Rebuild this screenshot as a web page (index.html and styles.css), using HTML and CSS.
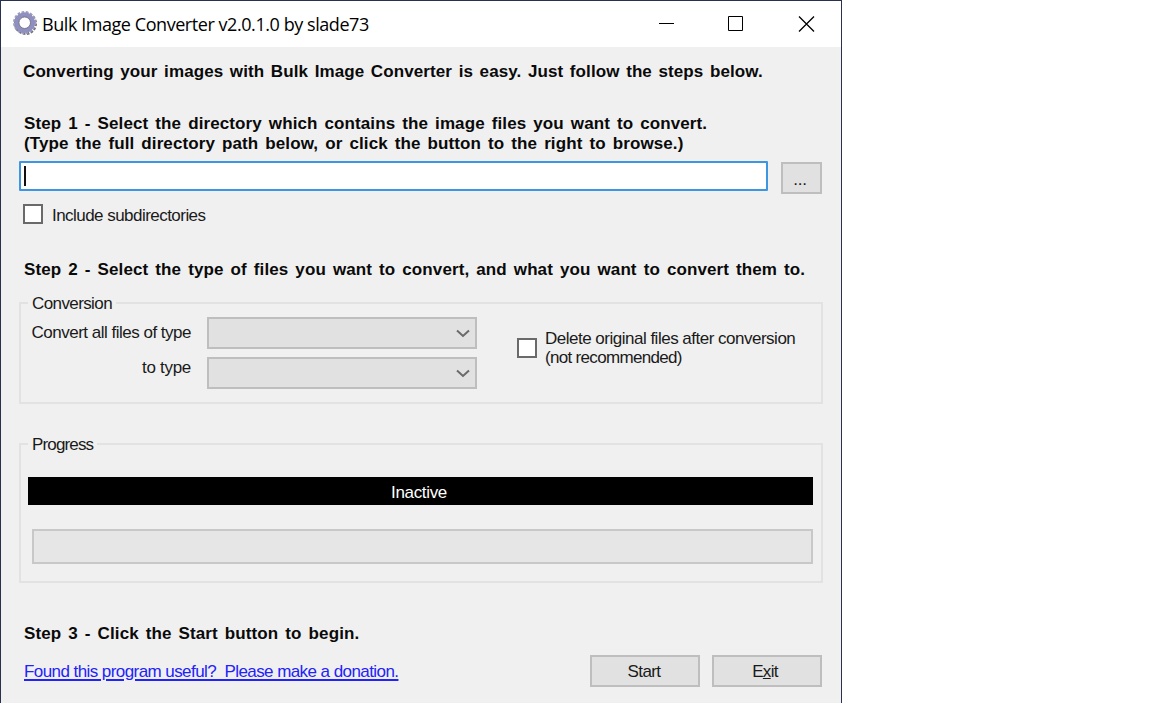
FILE: index.html
```html
<!DOCTYPE html>
<html lang="en">
<head>
<meta charset="utf-8">
<title>Bulk Image Converter</title>
<link rel="stylesheet" href="styles.css">
</head>
<body>
<div class="window">
  <header class="titlebar">
    <svg class="gear" width="26" height="26" viewBox="0 0 26 26">
      <circle cx="13.5" cy="13.5" r="10.2" fill="none" stroke="#73737d" stroke-width="2.6" stroke-dasharray="2.6 1.4"/>
      <circle cx="12.5" cy="12.5" r="10.4" fill="none" stroke="#9c9cc4" stroke-width="2.2" stroke-dasharray="2.6 1.56"/>
      <circle cx="12.7" cy="12.700" r="8" fill="none" stroke="#8f8fc0" stroke-width="4.400"/>
      <circle cx="12.7" cy="12.7" r="5.8" fill="none" stroke="#77778c" stroke-width="1"/>
    </svg>
    <h1 class="caption">Bulk Image Converter v2.0.1.0 by slade73</h1>
    <svg class="controls" width="160" height="18" viewBox="0 0 160 18" fill="none" stroke="#000" stroke-width="1">
      <path d="M1 8.5h15M70.500 1.500h14v14h-14z"/>
      <path d="M141 1.500l15 15M156 1.500l-15 15" stroke-width="1.300"/>
    </svg>
  </header>
  <main class="client">
    <p class="bold intro">Converting your images with Bulk Image Converter is easy. Just follow the steps below.</p>
    <div class="bold step1">
      <p>Step 1 - Select the directory which contains the image files you want to convert.</p>
      <p>(Type the full directory path below, or click the button to the right to browse.)</p>
    </div>
    <div class="path-row">
      <div class="path"><span class="caret"></span></div>
      <button class="button browse">...</button>
    </div>
    <label class="include"><span class="box"></span><span class="include-text">Include subdirectories</span></label>
    <p class="bold step2">Step 2 - Select the type of files you want to convert, and what you want to convert them to.</p>
    <fieldset class="group conversion">
      <legend class="legend-conversion">Conversion</legend>
      <div class="types">
        <span class="label from">Convert all files of type</span>
        <div class="combo"><svg width="14" height="9" viewBox="0 0 14 9"><path d="M1 1.500l6 5.500 6-5.500" fill="none" stroke="#6a6a6a" stroke-width="2"/></svg></div>
        <span class="label to">to type</span>
        <div class="combo"><svg width="14" height="9" viewBox="0 0 14 9"><path d="M1 1.500l6 5.500 6-5.500" fill="none" stroke="#6a6a6a" stroke-width="2"/></svg></div>
      </div>
      <label class="delete"><span class="box"></span><span>Delete original files after conversion<br><span class="delete-note">(not recommended)</span></span></label>
    </fieldset>
    <fieldset class="group progress">
      <legend class="legend-progress">Progress</legend>
      <div class="status">Inactive</div>
      <div class="bar"></div>
    </fieldset>
    <p class="bold step3">Step 3 - Click the Start button to begin.</p>
    <footer class="footer">
      <a class="link">Found this program useful?&nbsp; Please make a donation.</a>
      <button class="button start">Start</button>
      <button class="button exit">E<u>x</u>it</button>
    </footer>
  </main>
</div>
</body>
</html>
```
FILE: styles.css
```css
* { box-sizing: border-box; margin: 0; padding: 0; }
body { background: #fff; overflow: hidden; font: 17px/19px "Liberation Sans", Arial, sans-serif; letter-spacing: -.5px; color: #1a1a1a; white-space: nowrap; }
.window { width: 842px; height: 703px; border: 1px solid #2a3150; border-bottom: 0; background: #f0f0f0; }
.titlebar { height: 46px; background: #fff; display: flex; align-items: center; padding: 0 23px 0 11px; }
.gear { margin-bottom: 2px; }
.caption { margin: 0 0 1px 4px; font: 400 18px/24px "Open Sans", "Noto Sans", sans-serif; letter-spacing: -.44px; color: #000; }
.controls { margin-left: auto; }
.client { padding: 15px 18px 0; }
.bold { font-weight: 700; color: #0a0a0a; margin-left: 5px; letter-spacing: .1px; word-spacing: 2.2px; }
.intro { height: 52px; line-height: 20px; margin-left: 4px; word-spacing: 1.75px; }
.step1 { height: 47px; line-height: 19.500px; }
.path-row { display: flex; justify-content: space-between; height: 33px; padding-right: 1px; }
.path { width: 749px; height: 30px; border: 2px solid #3c97e2; border-radius: 1px; background: #fff; padding: 3px 0 0 3px; }
.caret { display: block; width: 1.500px; height: 20px; background: #111; }
.button { font: inherit; letter-spacing: inherit; color: inherit; background: #e1e1e1; border: 2px solid #bebebe; height: 32px; }
.browse { width: 41px; margin-top: 1px; padding: 3px 3px 0 0; letter-spacing: -.2px; }
.box { display: block; flex: none; width: 20px; height: 20px; border: 2px solid #6a6a6a; background: #fff; }
.include { display: flex; align-items: center; gap: 9px; height: 20px; margin: 10px 0 0 4px; }
.include-text { padding-top: 2px; letter-spacing: -.54px; }
.step2 { margin-top: 36px; height: 33px; line-height: 20px; }
.group { width: 804px; border: 2px solid #e2e2e2; }
.group legend { margin-left: 7px; padding: 0 4px 0 3px; height: 19px; line-height: 21px; }
.conversion { height: 111px; margin-top: 0; display: flex; align-items: flex-start; }
.types { display: grid; grid-template-columns: 159px 270px; grid-template-rows: 32px 32px; column-gap: 16px; row-gap: 8px; margin: 5px 0 0 11px; }
.label { justify-self: end; }
.from { margin-top: 6px; }
.to { margin-top: 1px; letter-spacing: -.3px; }
.combo { background: #e1e1e1; border: 2px solid #bebebe; display: flex; align-items: center; justify-content: flex-end; padding: 1px 5px 0 0; }
.delete { display: flex; align-items: center; gap: 8px; margin: 17px 0 0 40px; }
.delete-note { letter-spacing: -.68px; }
.progress { height: 149px; margin-top: 30px; }
.group .legend-conversion { padding-left: 4px; letter-spacing: -.6px; }
.group .legend-progress { padding-left: 4px; letter-spacing: -.85px; }
.status { width: 785px; height: 28px; margin: 24px 0 0 7px; padding-right: 3px; background: #000; color: #fff; text-align: center; line-height: 31px; letter-spacing: -.35px; }
.bar { width: 781px; height: 35px; margin: 24px 0 0 11px; border: 2px solid #c8c8c8; background: #e6e6e6; }
.step3 { margin-top: 41px; height: 31px; line-height: 20px; }
.footer { display: flex; align-items: center; height: 32px; padding: 0 1px 0 5px; }
.link { color: #2222fb; letter-spacing: -.57px; text-decoration: underline; text-underline-offset: 2px; text-decoration-thickness: 1.500px; }
.start { width: 110px; margin-left: auto; padding-right: 2px; letter-spacing: -.6px; }
.exit { width: 110px; margin-left: 12px; padding-right: 4px; letter-spacing: -.7px; }
```
